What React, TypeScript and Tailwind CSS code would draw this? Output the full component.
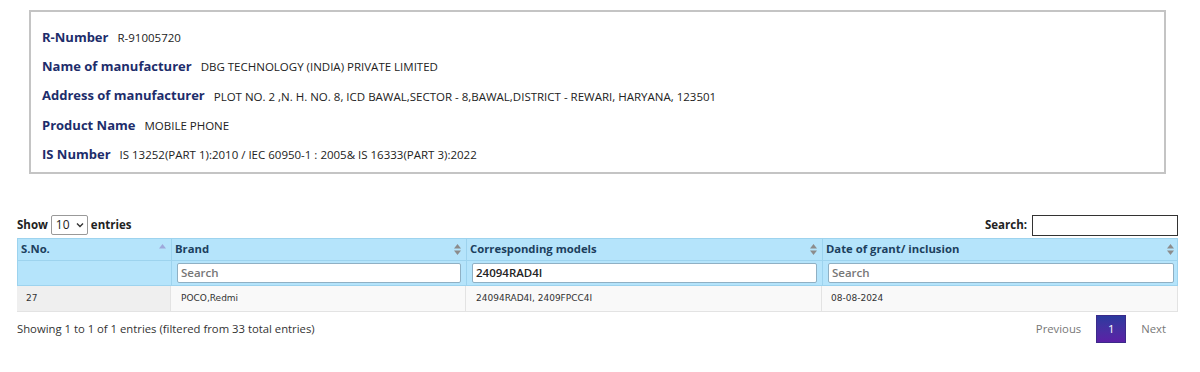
import React from "react";

const SortBoth = () => (
  <svg width="7" height="11" viewBox="0 0 7 11" className="shrink-0">
    <path d="M3.5 0 L7 4.5 H0 Z" fill="#8c8c8c" />
    <path d="M3.5 11 L7 6.5 H0 Z" fill="#8c8c8c" />
  </svg>
);
const SortAsc = () => (
  <svg width="7" height="11" viewBox="0 0 7 11" className="shrink-0">
    <path d="M3.5 0 L7 4.5 H0 Z" fill="#9fa8da" />
  </svg>
);

const rows: [string, string][] = [
  ["R-Number", "R-91005720"],
  ["Name of manufacturer", "DBG TECHNOLOGY (INDIA) PRIVATE LIMITED"],
  ["Address of manufacturer", "PLOT NO. 2 ,N. H. NO. 8, ICD BAWAL,SECTOR - 8,BAWAL,DISTRICT - REWARI, HARYANA, 123501"],
  ["Product Name", "MOBILE PHONE"],
  ["IS Number", "IS 13252(PART 1):2010 / IEC 60950-1 : 2005& IS 16333(PART 3):2022"],
];

const th = "h-[21px] flex items-center justify-between px-[3px] pr-[5px] text-[11.3px] font-bold text-[#1c3f5e]";
const inp = "w-full h-[20px] bg-white border border-[#8fb0c4] rounded-[2px] px-[3px] flex items-center text-[11.5px] font-semibold";

export default function App() {
  return (
    <div className="w-[1200px] h-[372px] bg-white text-[#333] overflow-hidden" style={{ fontFamily: '"Open Sans", sans-serif' }}>
      <div className="pl-[29px] pr-[34px] pt-[10px]">
        <div className="border-2 border-[#c4c4c4] h-[164px] pl-[11px] pt-[11px] flex flex-col">
          {rows.map(([l, v]) => (
            <div key={l} className="h-[29.3px] flex items-center gap-[9px]">
              <span className="text-[13px] font-bold text-[#1d2d6b]">{l}</span>
              <span className="text-[11.5px] text-[#222]">{v}</span>
            </div>
          ))}
        </div>
      </div>

      <div className="px-[17px] pt-[40px] w-[1195px]">
        <div className="flex items-center justify-between h-[22px]">
          <div className="flex items-center gap-[3px] text-[11.5px] font-bold text-[#222]">
            <span>Show</span>
            <div className="flex items-center border border-[#999] rounded-[2px] h-[20px] w-[37px] pl-[4px] pr-[3px] justify-between font-normal text-[12px]">
              <span>10</span>
              <svg width="8" height="6" viewBox="0 0 8 6"><path d="M1 1.5 L4 4.5 L7 1.5" stroke="#333" strokeWidth="1.4" fill="none" /></svg>
            </div>
            <span>entries</span>
          </div>
          <div className="flex items-center gap-[5px] text-[11.5px] font-bold text-[#222]">
            <span>Search:</span>
            <div className="w-[146px] h-[21px] border border-[#333] bg-white" />
          </div>
        </div>

        <div className="mt-[2px] w-[1161px]">
          <div className="grid grid-cols-[154px_295px_356px_356px] bg-[#b5e4fb] border border-[#9dd3ee]">
            <div className={th + " border-r border-[#9dd3ee]"}>
              <span>S.No.</span><SortAsc />
            </div>
            <div className={th + " border-r border-[#9dd3ee]"}>
              <span>Brand</span><SortBoth />
            </div>
            <div className={th + " border-r border-[#9dd3ee]"}>
              <span>Corresponding models</span><SortBoth />
            </div>
            <div className={th}>
              <span>Date of grant/ inclusion</span><SortBoth />
            </div>
          </div>
          <div className="grid grid-cols-[154px_295px_356px_356px] bg-[#b5e4fb] border-x border-b border-[#9dd3ee]">
            <div className="h-[24px] border-r border-[#9dd3ee]" />
            <div className="h-[24px] flex items-center px-[5px] border-r border-[#9dd3ee]">
              <div className={inp + " text-[#777]"}>Search</div>
            </div>
            <div className="h-[24px] flex items-center px-[5px] border-r border-[#9dd3ee]">
              <div className={inp + " text-[#222]"}>24094RAD4I</div>
            </div>
            <div className="h-[24px] flex items-center px-[5px]">
              <div className={inp + " text-[#777]"}>Search</div>
            </div>
          </div>
          <div className="grid grid-cols-[154px_295px_356px_356px] border-b border-[#e3e3e3] text-[9px] text-[#333]" style={{ fontFamily: '"DejaVu Sans", Verdana, sans-serif' }}>
            <div className="h-[25px] flex items-center pl-[9px] bg-[#efefef] border-r border-[#e3e3e3]">27</div>
            <div className="h-[25px] flex items-center pl-[10px] bg-[#f9f9f9] border-r border-[#e3e3e3]">POCO,Redmi</div>
            <div className="h-[25px] flex items-center pl-[10px] bg-[#f9f9f9] border-r border-[#e3e3e3]">24094RAD4I, 2409FPCC4I</div>
            <div className="h-[25px] flex items-center pl-[9px] bg-[#f9f9f9] border-r border-[#e3e3e3]">08-08-2024</div>
          </div>
        </div>

        <div className="flex items-center justify-between w-[1161px] mt-[3px]">
          <span className="text-[11.3px] text-[#333]">Showing 1 to 1 of 1 entries (filtered from 33 total entries)</span>
          <div className="flex items-center text-[11.3px] text-[#777] mr-[12px]">
            <span className="mr-[15px]">Previous</span>
            <span className="w-[30px] h-[28px] flex items-center justify-center text-white bg-gradient-to-b from-[#2a3a9e] to-[#5b1fa6] border border-[#3b2a8a]">1</span>
            <span className="ml-[15px]">Next</span>
          </div>
        </div>
      </div>
    </div>
  );
}
